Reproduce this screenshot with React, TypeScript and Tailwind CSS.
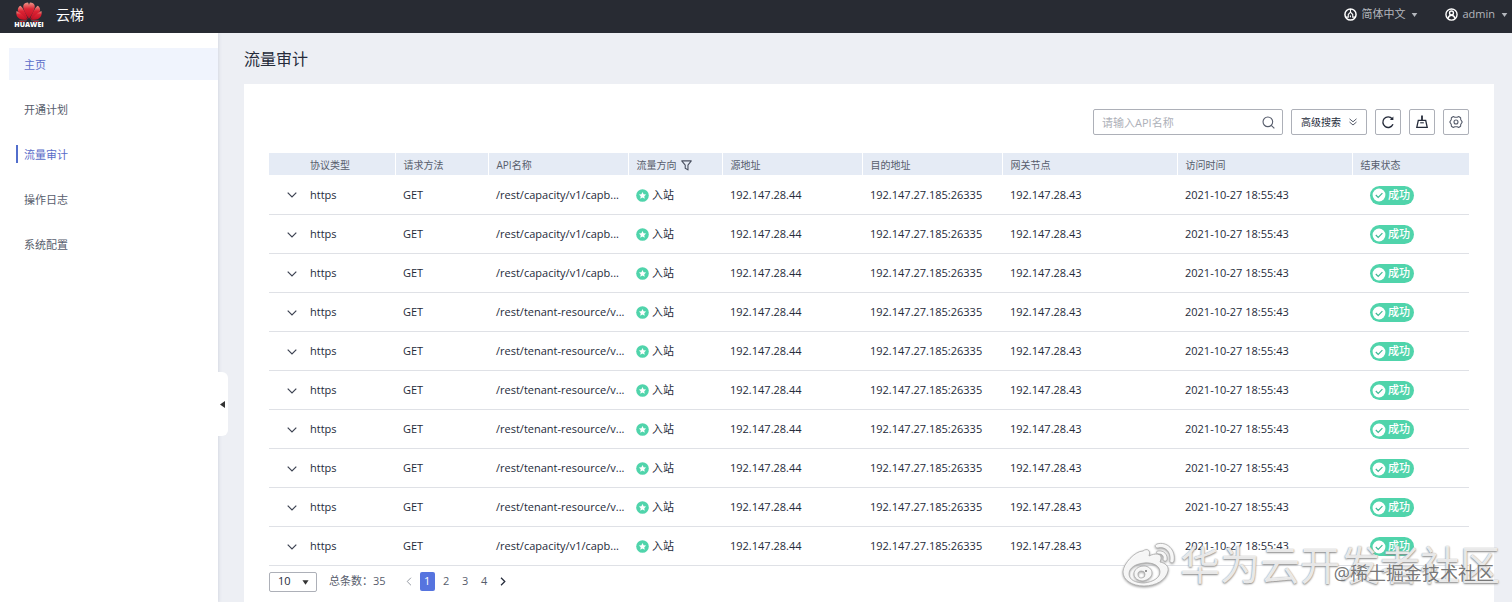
import { useState } from 'react';

const NAV = ['主页', '开通计划', '流量审计', '操作日志', '系统配置'];
const COLUMNS = ['协议类型', '请求方法', 'API名称', '流量方向', '源地址', '目的地址', '网关节点', '访问时间', '结束状态'];
const CAPACITY = '/rest/capacity/v1/capb...';
const TENANT = '/rest/tenant-resource/v...';
const APIS = [CAPACITY, CAPACITY, CAPACITY, TENANT, TENANT, TENANT, TENANT, TENANT, TENANT, CAPACITY];
const PAGES = [1, 2, 3, 4];

function HuaweiLogo() {
  return (
    <div className="flex w-7 flex-col items-center">
      <svg viewBox="0 0 54 42" className="h-5 w-7" aria-hidden="true">
        <defs>
          <linearGradient id="petal" x1="0" y1="0" x2="0" y2="1">
            <stop offset="0" stopColor="#f0988a" />
            <stop offset="0.4" stopColor="#dd2434" />
            <stop offset="1" stopColor="#c01024" />
          </linearGradient>
        </defs>
        <g fill="url(#petal)">
          <path d="M26.5 35C28 22 29 6 25 1 20 1 16 3 15 8c-1 8 6 18 11.500 27z" />
          <path d="M27.5 35C26 22 25 6 29 1c5 0 9 2 10 7 1 8-6 18-11.500 27z" />
          <path d="M24.5 36C21 25 15 13 9 8 3 11 2 18 6 23c4 6 12 10 18.500 13z" />
          <path d="M29.5 36C33 25 39 13 45 8c6 3 7 10 3 15-4 6-12 10-18.500 13z" />
          <path d="M23.5 37.500C17 30 9 23 1 19c-2 7 1 14 7 16.500 4 2 10 2 15.500 2z" />
          <path d="M30.5 37.500C37 30 45 23 53 19c2 7-1 14-7 16.500-4 2-10 2-15.500 2z" />
          <path d="M23 39.5c-6-.5-12-.5-18 0 4 3.500 11 3 18 0z" />
          <path d="M31 39.5c6-.5 12-.5 18 0-4 3.500-11 3-18 0z" />
        </g>
      </svg>
      <span className="text-[7px] leading-[6px] font-black text-white">HUAWEI</span>
    </div>
  );
}

function Caret({ className }: { className: string }) {
  return (
    <svg viewBox="0 0 8 5" className={className} fill="currentColor" aria-hidden="true">
      <path d="M0.5 0h7L4 5z" />
    </svg>
  );
}

function TopBar() {
  return (
    <header className="z-10 flex h-[33px] items-center justify-between bg-[#282b33] pr-1 pl-[15px] text-[#b4b7bd]">
      <div className="flex items-center gap-[13px] pb-1">
        <HuaweiLogo />
        <span className="text-sm text-white">云梯</span>
      </div>
      <div className="flex items-center gap-[27px] pb-1 text-[11px]">
        <button type="button" className="flex items-center gap-1">
          <svg viewBox="0 0 14 14" className="size-[13px] text-white" fill="none" stroke="currentColor" strokeWidth="1.6" aria-hidden="true">
            <circle cx="7" cy="7" r="6" />
            <path d="M7 1v3.5M7 4.5L4.6 7v2.8H1.8M7 4.5L9.4 7v2.8h2.8M6.9 8v2" strokeWidth="1.2" />
          </svg>
          简体中文
          <Caret className="ml-0.5 h-1 w-[7px]" />
        </button>
        <button type="button" className="flex items-center gap-1">
          <svg viewBox="0 0 14 14" className="size-[13px] text-white" fill="none" stroke="currentColor" strokeWidth="1.5" aria-hidden="true">
            <circle cx="7" cy="7" r="6" />
            <circle cx="7" cy="5.4" r="2.1" />
            <path d="M3.2 11.4C3.8 8.8 5.2 7.8 7 7.8s3.2 1 3.8 3.6" />
          </svg>
          admin
          <Caret className="ml-0.5 h-1 w-[7px]" />
        </button>
      </div>
    </header>
  );
}

function Sidebar({ active }: { active: string }) {
  return (
    <aside className="relative w-[218px] shrink-0 bg-white pt-[15px] pl-[9px] shadow-[1px_0_3px_#d5d9e2]">
      <nav className="flex flex-col gap-[13px] text-[11px]">
        {NAV.map((item, i) => (
          <a
            key={item}
            href="#"
            className={`flex h-8 items-center pl-[7px] ${i === 0 ? 'bg-[#f0f4fd]' : ''} ${
              i === 0 || item === active ? 'text-[#5a6cc8]' : 'text-[#575d6c]'
            }`}
          >
            <span className={`border-l-2 pt-0.5 pl-[6px] ${item === active ? 'border-[#526ecc]' : 'border-transparent'}`}>{item}</span>
          </a>
        ))}
      </nav>
      <button
        type="button"
        aria-label="收起"
        className="absolute top-[339px] left-full flex h-16 w-[10px] items-center rounded-r-md bg-white pl-[2px] text-[#333]"
      >
        <svg viewBox="0 0 5 7" className="h-[7px] w-[5px]" fill="currentColor" aria-hidden="true">
          <path d="M5 0v7L0 3.5z" />
        </svg>
      </button>
    </aside>
  );
}

function Toolbar() {
  const iconButton = 'flex h-[26px] w-[26px] items-center justify-center rounded-xs border border-[#adb0b8] text-[#252b3a]';
  return (
    <div className="flex justify-end gap-2">
      <div className="flex h-[26px] w-[190px] items-center rounded-xs border border-[#adb0b8] pr-[7px] pl-2">
        <input
          type="text"
          aria-label="API名称"
          placeholder="请输入API名称"
          className="min-w-0 flex-1 pt-0.5 text-[11px] outline-none placeholder:text-[#adb0b8]"
        />
        <button type="button" aria-label="搜索">
          <svg viewBox="0 0 14 14" className="size-[13px]" fill="none" stroke="#575d6c" strokeWidth="1.2" aria-hidden="true">
            <circle cx="6.3" cy="6.3" r="5.2" />
            <path d="M10 10l3.3 3.3" />
          </svg>
        </button>
      </div>
      <button
        type="button"
        className="flex h-[26px] w-[76px] items-center justify-center gap-2 rounded-xs border border-[#adb0b8] text-[10px] text-[#252b3a]"
      >
        高级搜索
        <svg viewBox="0 0 8 8" className="size-2" fill="none" stroke="#575d6c" aria-hidden="true">
          <path d="M0.5 0.8L4 3.8l3.5-3M0.5 4L4 7l3.5-3" />
        </svg>
      </button>
      <button type="button" aria-label="刷新" className={iconButton}>
        <svg viewBox="0 0 14 14" className="size-[14px]" fill="none" stroke="currentColor" strokeWidth="1.4" aria-hidden="true">
          <path d="M12 9.3A5.3 5.3 0 1 1 11.2 3.7" />
          <path d="M12.4 1.5v3.6H8.900z" fill="currentColor" stroke="none" />
        </svg>
      </button>
      <button type="button" aria-label="清理" className={iconButton}>
        <svg viewBox="0 0 14 14" className="size-[14px]" fill="none" stroke="currentColor" strokeWidth="1.3" aria-hidden="true">
          <path d="M3.3 5.4h7.4l1.5 6.9H1.800z" />
          <path d="M7 0.5v4.900" strokeWidth="1.8" />
          <path d="M5.2 7.8h3.600" strokeWidth="1.1" />
        </svg>
      </button>
      <button type="button" aria-label="设置" className={iconButton}>
        <svg viewBox="0 0 14 14" className="size-[14px]" fill="none" stroke="#575d6c" strokeWidth="1.1" strokeLinejoin="round" aria-hidden="true">
          <path d="M4.3 1.5L5.8 2.3h2.4l1.5-.8 1.9 1.2.1 1.700L13.2 7l-1.500 2.600-.1 1.700-1.900 1.200-1.500-.8H5.800l-1.500.8-1.900-1.200-.1-1.700L.8 7l1.500-2.600.1-1.700z" />
          <circle cx="7" cy="7" r="2" />
        </svg>
      </button>
    </div>
  );
}

function AuditTable() {
  return (
    <table className="mt-[18px] w-full table-fixed text-left text-[11px] text-[#252b3a]">
      <colgroup>
        <col className="w-[33px]" />
        <col className="w-[93px]" />
        <col className="w-[93px]" />
        <col className="w-[140px]" />
        <col className="w-[94px]" />
        <col className="w-[140px]" />
        <col className="w-[140px]" />
        <col className="w-[175px]" />
        <col className="w-[175px]" />
        <col className="w-[117px]" />
      </colgroup>
      <thead>
        <tr className="h-[22px] bg-[#e5ebf5] text-[10px] text-[#575d6c]">
          <td />
          {COLUMNS.map((name) => (
            <th key={name} scope="col" className="border-r border-white p-0 pt-0.5 pl-2 font-normal last:border-r-0">
              <div className="flex items-center gap-1">
                {name}
                {name === '流量方向' && (
                  <svg viewBox="0 0 12 12" className="size-[11px]" fill="none" stroke="#4a5060" strokeWidth="1.2" strokeLinejoin="round" aria-hidden="true">
                    <path d="M0.8 1h10.4L7.6 5.6v5.2L4.6 9V5.6z" />
                  </svg>
                )}
              </div>
            </th>
          ))}
        </tr>
      </thead>
      <tbody>
        {APIS.map((api, i) => (
          <tr key={i} className="h-[39px] border-b border-[#dfe1e6] whitespace-nowrap *:p-0 *:pt-0.5 *:pl-2">
            <td>
              <button type="button" aria-label="展开" className="ml-[10px] flex">
                <svg viewBox="0 0 10 6" className="h-[6px] w-[10px]" fill="none" stroke="#3d4352" strokeWidth="1.2" aria-hidden="true">
                  <path d="M0.7 0.6L5 4.9 9.3 0.6" />
                </svg>
              </button>
            </td>
            <td>https</td>
            <td>GET</td>
            <td>{api}</td>
            <td>
              <div className="flex items-center gap-[3px]">
                <svg viewBox="0 0 13 13" className="size-[13px]" aria-hidden="true">
                  <circle cx="6.5" cy="6.5" r="6.3" fill="#50d4ab" />
                  <path d="M6.5 2.9l1.1 2.3 2.5.3-1.8 1.8.4 2.5-2.2-1.2-2.2 1.2.4-2.5-1.8-1.8 2.5-.3z" fill="#fff" />
                </svg>
                入站
              </div>
            </td>
            <td>192.147.28.44</td>
            <td>192.147.27.185:26335</td>
            <td>192.147.28.43</td>
            <td>2021-10-27 18:55:43</td>
            <td>
              <span className="ml-[10px] flex h-[19px] w-11 items-center gap-[2px] rounded-full bg-[#50d4ab] pl-[2px] font-medium text-white">
                <svg viewBox="0 0 14 14" className="size-[14px] shrink-0" fill="none" aria-hidden="true">
                  <circle cx="7" cy="7" r="6.4" fill="#fff" />
                  <path d="M3.8 7l2.4 2.4 4.2-4.2" stroke="#3cb893" strokeWidth="1.2" />
                </svg>
                成功
              </span>
            </td>
          </tr>
        ))}
      </tbody>
    </table>
  );
}

function Pagination() {
  const [page, setPage] = useState(1);
  return (
    <div className="mt-[6px] flex h-5 items-center text-[11px] text-[#575d6c]">
      <div className="relative">
        <select aria-label="每页条数" className="h-5 w-12 appearance-none rounded-xs border border-[#adb0b8] pl-2 text-[#252b3a]">
          <option>10</option>
          <option>20</option>
          <option>50</option>
        </select>
        <Caret className="pointer-events-none absolute top-2 right-2 h-[5px] w-[7px] text-[#333]" />
      </div>
      <span className="ml-3">总条数：35</span>
      <button type="button" aria-label="上一页" className="ml-5" onClick={() => setPage(Math.max(1, page - 1))}>
        <svg viewBox="0 0 6 10" className="h-[9px] w-[6px]" fill="none" stroke="#8a8e99" aria-hidden="true">
          <path d="M5.2 0.8L1 5l4.2 4.2" />
        </svg>
      </button>
      <div className="mx-2 flex gap-1">
        {PAGES.map((p) => (
          <button
            key={p}
            type="button"
            onClick={() => setPage(p)}
            className={`h-[19px] w-[15px] rounded-xs ${p === page ? 'bg-[#5674df] text-white' : ''}`}
          >
            {p}
          </button>
        ))}
      </div>
      <button type="button" aria-label="下一页" onClick={() => setPage(Math.min(4, page + 1))}>
        <svg viewBox="0 0 6 10" className="h-[9px] w-[6px]" fill="none" stroke="#252b3a" strokeWidth="1.4" aria-hidden="true">
          <path d="M0.8 0.8L5 5 0.8 9.2" />
        </svg>
      </button>
    </div>
  );
}

function Watermark() {
  return (
    <div className="pointer-events-none absolute right-3 bottom-[14px] flex items-center gap-1">
      <svg viewBox="0 0 54 46" className="h-[46px] w-[54px] drop-shadow-[0_1px_1px_#999]" fill="none" aria-hidden="true">
        <g fill="#fff" fillOpacity="0.9" stroke="#aaa" strokeWidth="0.8">
          <path
            fillRule="evenodd"
            d="M21 9c4-3 8-1 6 5 6-3 13-3 12 3l-1 3c5 1 9 4 8 9-2 9-12 15-24 15C10 44 1 38 1 30 1 22 13 9 21 9zM22 21c-9 1-15 5-15 11s7 9 15 9c9-1 16-5 16-11s-7-10-16-9z"
          />
          <path fillRule="evenodd" d="M22 24c-6 0-10 4-10 8 0 4 4 7 9 7 5-1 9-4 9-8 0-4-4-7-8-7zm-3 5a3.5 3.5 0 1 0 1 7 3.5 3.5 0 0 0-1-7z" />
          <path d="M35 2c10-3 19 6 17 17-.5 3-5 2-4-1 1-8-5-14-12-12-3 0-4-3-1-4z" />
          <path d="M36 9c6-1 10 4 9 9-1 2-4 1-4-1 1-3-1-5-4-5-3 0-3-3-1-3z" />
        </g>
        <circle cx="24" cy="29" r="1" fill="#777" />
      </svg>
      <span className="text-[40px] leading-[46px] text-white/80 [text-shadow:0_1px_2px_#888,0_0_1px_#999]">华为云开发者社区</span>
      <span className="absolute right-[6px] bottom-px text-[18px] leading-7 text-[#666]/90 [text-shadow:0_0_1px_#fff]">@稀土掘金技术社区</span>
    </div>
  );
}

export default function App() {
  return (
    <div className="relative flex min-h-screen flex-col bg-[#edeff4] font-['Open_Sans','Noto_Sans_CJK_SC',sans-serif]">
      <TopBar />
      <div className="flex flex-1">
        <Sidebar active="流量审计" />
        <main className="flex min-w-0 flex-1 flex-col pr-[18px] pl-[26px]">
          <h1 className="flex h-[51px] items-center text-base text-[#252b3a]">流量审计</h1>
          <section className="flex-1 bg-white px-[25px] pt-[25px] pb-[10px]">
            <Toolbar />
            <AuditTable />
            <Pagination />
          </section>
        </main>
      </div>
      <Watermark />
    </div>
  );
}
